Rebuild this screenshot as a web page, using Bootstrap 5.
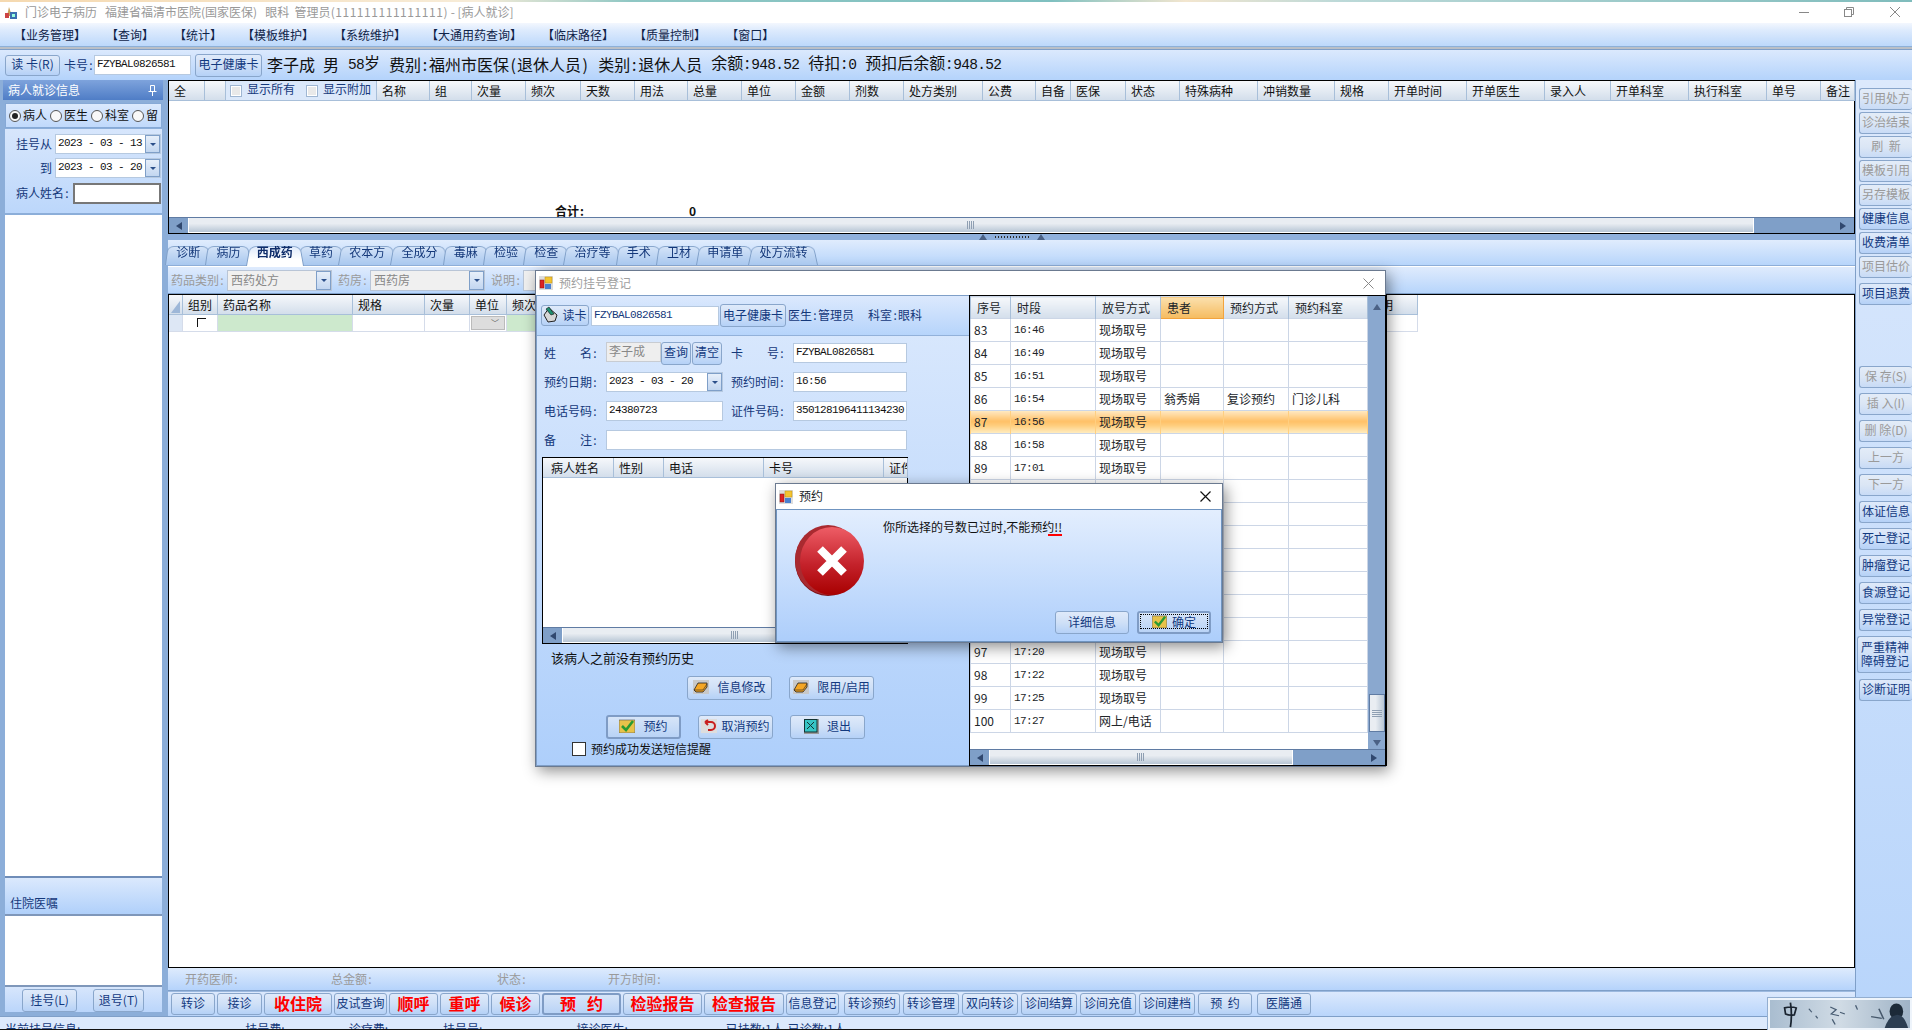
<!DOCTYPE html>
<html lang="zh">
<head>
<meta charset="utf-8">
<title>门诊电子病历</title>
<link href="https://cdn.jsdelivr.net/npm/bootstrap@5.3.0/dist/css/bootstrap.min.css" rel="stylesheet">
<style>
html,body{margin:0;height:100%;overflow:hidden}
body{width:1912px;height:1030px;background:#fff;color:#111;font:12px/1.2 "Noto Sans CJK SC","Liberation Sans",sans-serif;position:relative}
.fm{font-family:"Liberation Mono","Noto Sans CJK SC",monospace;font-size:11px;letter-spacing:-.6px}
.cn{display:inline-block;width:6px;text-align:center}
.big{font-size:16px;line-height:1}
.fmb{font-family:"Liberation Mono",monospace;font-size:14.5px;letter-spacing:-.7px}
.big .cn{width:8px}
.gapa{margin-left:9px}
.wallstrip{height:2px;background:linear-gradient(90deg,#f5d9b0 0,#f7ecd8 25%,#8fc7c4 33%,#7fc0c0 55%,#f3e6cf 62%,#bcd9d8 70%,#7fbcbc 100%)}
.titlebar{height:21px;background:#fff;color:#999;padding-left:3px;position:relative}
.titletxt{margin-left:6px;white-space:pre}
.ones{letter-spacing:.55px}
.winbtn{position:absolute;top:3px;width:14px;height:14px}
.wb1{left:1797px}.wb2{left:1842px}.wb3{left:1888px}
.menubar{height:24px;background:linear-gradient(#f3f7fe,#deebfd 30%,#bcd8fb);border-bottom:1px solid #8db0d8;padding:1px 0 0 14px;gap:20px;color:#0f2348}
.seprule{height:3px;background:#b9bfc7;border-bottom:1px solid #7f9fc8}
.toolbar{height:30px;padding:0 0 0 5px;background:linear-gradient(#dbe9fd,#b4d3fb);color:#111}
.toolinfo{margin-top:-3px;margin-left:5px}
.xbtn.btn{padding:0 0 2px;font-size:12px;line-height:1;color:#12397f;background:linear-gradient(#dfeafa,#cfe0f7 50%,#b5d1f7);border:1px solid #89a6cb;border-radius:3px;display:flex;align-items:center;justify-content:center;white-space:pre;flex:none}
.xbtn.btn.off{color:#9a9a9a;background:linear-gradient(#e3ecf8,#dbe6f5 50%,#c8dbf6)}
.xbtn.btn.red{color:#f00;font-size:16px;font-weight:700}
.xbtn.btn.def{border:2px solid #7f9cc5;background:linear-gradient(#d7e5f8,#b9d3f6)}
.fld{background:#fff;border:1px solid #b6c9e0;height:20px;padding:0 0 0 2px;display:flex;align-items:center;flex:none;white-space:pre}
.fld.dim{background:#eee;color:#888;border-color:#c8ccd2}
.ddb{margin-left:auto;width:15px;height:100%;flex:none;background:linear-gradient(#e7effa,#c2d6f0);border:1px solid #7f9fc8;display:flex;align-items:center;justify-content:center}
.ddb::after{content:"";border:3px solid transparent;border-top:3px solid #2b4f8a;border-bottom:0}
.lab{color:#14387a;white-space:pre;flex:none}
.w55{width:55px}.w97{width:97px}.w106{width:106px}.w88{width:88px}.w67{width:67px}.w51{width:51px}
.h21{height:21px}.h22{height:22px}.h23{height:23px}
.mainrow{height:936px}
.leftside{width:168px;flex:none;background:#8caed9;padding:0 5px 4px 3px}
.leftside>div:not(.sidehead){margin-left:2px;margin-right:1px}
.sidehead{height:20px;background:linear-gradient(#7ea3dc,#4f7dc6);color:#fff;padding:0 6px 0 5px;font-size:12px;margin-bottom:3px}
.radiorow{height:25px;border:1px solid #86a9d6;position:relative;padding:0 0 0 3px;overflow:hidden;background:linear-gradient(#dbe9fd,#c0d9fb);margin-bottom:1px;gap:2px}
.rd{width:12px;height:12px;border:1px solid #555;border-radius:50%;background:#f8f8f8;flex:none;display:flex;align-items:center;justify-content:center}
.rd.on::after{content:"";width:6px;height:6px;border-radius:50%;background:#222}
.rdt{width:25px;flex:none;color:#111;white-space:nowrap}
.datebox{height:84px;background:linear-gradient(#d7e6fc,#bcd7fb);padding-top:5px;margin-bottom:2px}
.dline{height:20px;margin-bottom:4px;justify-content:flex-end;padding-right:1px;gap:3px}
.dl3{margin-top:5px}
.namein{height:21px;border:2px solid #777}
.whitefill{background:#fff;flex:1 1 auto;border-bottom:2px solid #6f8db8}
.zybar{height:38px;background:linear-gradient(#dbe9fd,#b0d0fa);color:#14387a;padding:0 0 4px 5px;display:flex;align-items:flex-end;border-bottom:2px solid #7f97ba}
.lowfill{height:71px;background:#fff;border-bottom:2px solid #7f97ba}
.lowbtns{height:25px;gap:16px;padding:2px 0 0 17px;background:linear-gradient(#d7e6fc,#bad5fb)}
.centercol{width:1687px;flex:none}
.gridbox{height:154px;border:1px solid #000;background:#fff;display:flex;flex-direction:column}
.ghead{display:grid;height:20px;font-size:12px;flex:none}
.gcell{background:linear-gradient(#f6f8fb,#d3deeb);border-right:1px solid #a8bfd9;border-bottom:1px solid #a8bfd9;padding-left:5px;white-space:nowrap;overflow:hidden;line-height:19px}
.g1{grid-template-columns:36px 21px 151px 53px 42px 54px 55px 54px 53px 54px 54px 54px 54px 79px 53px 35px 55px 54px 78px 77px 54px 78px 78px 66px 78px 78px 54px 34px}
.g2{grid-template-columns:14px 35px 135px 72px 45px 37px 54px 803px 54px}
.gcell.showbar{background:#dbe8fa;color:#14387a;gap:5px;padding:0 0 4px 4px;line-height:1}
.mbox{width:12px;height:12px;border:1px solid #9fb6d2;background:#e9e9e9;box-shadow:inset 0 0 0 1px #fff;flex:none;margin-top:4px}
.mgap{margin-left:6px}
.hscroll{height:16px;background:#7f9fc8;border-top:1px solid #5f7ba3;position:relative;flex:none;display:flex}
.hbtn{width:19px;flex:none;display:flex;align-items:center;justify-content:center;background:#7f9fc8}
.thumb{background:linear-gradient(#e9edf2 40%,#b8c6d5);border:1px solid #fff;border-top:0;display:flex;align-items:center;justify-content:center}
.tw1{width:1566px}.tw2{width:304px}
.grip{width:8px;height:8px;background:repeating-linear-gradient(90deg,#8f9fb2 0 1px,transparent 1px 2px)}
.tri-l{border:4px solid transparent;border-right:6px solid #30486f;border-left:0}
.tri-r{border:4px solid transparent;border-left:6px solid #30486f;border-right:0}
.tri-u{border:4px solid transparent;border-bottom:6px solid #4b6185;border-top:0}
.tri-d{border:4px solid transparent;border-top:6px solid #4b6185;border-bottom:0}
.sumrow{padding-left:386px;height:0;line-height:1}
.sumval{margin-left:104px}
.splitter{height:6px;background:#8fb0dc;gap:8px}
.dots{width:34px;height:2px;background:repeating-linear-gradient(90deg,#2c2c2c 0 1px,transparent 1px 3px)}
.tabbar.nav{height:26px;background:linear-gradient(#e0ecfd,#b7d5fb);border-bottom:1px solid #8eaed8;padding-top:3px;flex-wrap:nowrap;align-items:stretch}
.tabbar .tabi{position:relative;padding:0 8.13px 4px;display:flex;align-items:center;color:#14387a;z-index:1;height:22px;white-space:nowrap;text-decoration:none}
.tabbar .tabi::before{content:"";position:absolute;inset:0 -3px 0 -3px;background:linear-gradient(#d5e4f8,#a9c8ef);border:1px solid #7f9fc8;border-bottom:0;border-radius:7px 7px 0 0;transform:perspective(34px) rotateX(12deg);transform-origin:bottom;z-index:-1}
.tabbar .tabi.active{font-weight:700;z-index:3;color:#0f2d6a;height:23px}
.tabbar .tabi.active::before{background:linear-gradient(#dfeafb,#fff 70%)}
.subbar{height:27px;background:linear-gradient(#dfebfd,#b7d5fb);color:#9a9a9a;padding-left:3px;margin-top:1px;gap:2px;border-bottom:1px solid #7f9fc8}
.seltop{height:21px;background:#f0f0f0;border:1px solid #b9c5d6;color:#888;padding-left:3px;flex:none;display:flex;align-items:center}
.s103{width:105px}.s115{width:115px}.s100{width:100px}
.gridb2{height:674px;border:1px solid #000;background:#fff;overflow:hidden}
.rowb{display:grid;height:17px}
.rcell{border-right:1px solid #d5dcea;border-bottom:1px solid #d5dcea;background:#fff}
.rcell.hd{background:#dde7f5}
.rcell.gr{background:#cde9cd}
.corner{position:relative}
.corner::after{content:"";position:absolute;left:14px;top:3px;width:9px;height:9px;border-top:1px solid #111;border-left:1px solid #111}
.unitc{padding:1px;display:flex}
.unitc i{flex:1;background:#ddd;border:1px solid #bbb;display:flex;justify-content:flex-end;align-items:center;padding-right:5px;font-style:normal;font-size:8px;color:#555}
.footinfo{height:23px;background:linear-gradient(#deebfd,#b5d3fb);color:#9a9a9a;border-bottom:1px solid #7f9fc8;position:relative}
.footinfo span{flex:none}
.footA{margin-left:17px;width:146px}.footB{width:166px}.footC{width:111px}
.btnbar{height:25px;gap:2px;padding:1px 0 1px 3px;background:linear-gradient(#dce9fd,#b9d5fb);border-top:1px solid #9cb9df}
.b44{width:44px}.b45{width:45px}.b68{width:68px}.b53{width:53px}.b49{width:49px}.b79{width:79px}.b80{width:80px}.b56{width:56px}.b54{width:54px}
.gp1{margin-left:1px}.gp3{margin-left:3px}
.rightstrip{flex:1 1 auto;background:linear-gradient(#dce9fc,#b8d5fb);border-left:1px solid #7f9fc8;padding:8px 0 0 3px;overflow:hidden}
.rightstrip .xbtn{width:53px;height:22px;border-right:0}
.stripA{gap:2px}.stripgap{margin-top:3px}
.stripB{margin-top:61px;gap:5px}
.rightstrip .tall{height:37px;white-space:normal;line-height:1.1;text-align:center;margin-left:-2px;width:55px}
.rightstrip .tall2{margin-top:1px}
.statusbar{height:14px;background:#dce9fc;border-top:1px solid #7f9fc8;border-bottom:1px solid #111;overflow:hidden;color:#14387a;padding-left:5px;line-height:24px;white-space:nowrap}
.statusbar span{display:inline-block}
.sb1{margin-left:165px}.sb2{margin-left:64px}.sb3{margin-left:55px}.sb4{margin-left:94px}.sb5{margin-left:98px}.sb6{margin-left:4px}
.xwin.modal-content{position:absolute;border-radius:0;background:#fff;border:1px solid #6b7a90;box-shadow:3px 4px 14px rgba(0,0,0,.45);display:flex;flex-direction:column}
.xwin.regwin{left:535px;top:270px;width:851px;height:497px}
.xwin.errwin{left:775px;top:483px;width:448px;height:160px}
.wintitle{height:25px;background:#fff;flex:none;gap:6px;padding:0 3px;color:#a0a0a0;position:relative}
.regwin .wintitle{height:24px}
.winx{position:absolute;right:10px;top:6px;width:13px;height:13px}
.regbody{min-height:0}
.leftpane{width:433px;flex:none;background:linear-gradient(#dbe9fd,#aecffb);border:1px solid #7f9fc8;border-right:0;position:relative;height:100%}
.toppanel{height:40px;padding-left:4px;gap:2px;background:linear-gradient(#dce9fd,#b6d4fb);border-bottom:1px solid #92b1da;color:#14387a}
.w48{width:48px}.w128{width:128px}.w66{width:66px}.nudge{margin-left:-1px}.w55f{width:55px}.w30{width:30px}.mem{margin-left:12px}
.formgrid{display:grid;grid-template-columns:56px 117px 54px 114px;column-gap:8px;row-gap:9px;padding:7px 0 0 5px;grid-auto-rows:20px;align-items:center}
.rlab{text-align:right;white-space:pre;color:#14387a}
.memo{grid-column:2 / span 3}
.histbox{margin:7px 0 0 5px;width:366px;height:187px;border:1px solid #000;background:#fff;display:flex;flex-direction:column}
.g3{grid-template-columns:71px 50px 100px 120px 24px}
.nohist{margin:5px 0 0 14px;font-size:13px;line-height:18px;color:#111}
.hrow1{margin:9px 0 0 150px;gap:17px}.hrow1 .xbtn{width:85px;height:24px}
.hrow2{margin:15px 0 0 69px;gap:17px}.hrow2 .xbtn{width:75px;height:24px}
.chkline{margin:3px 0 0 35px;gap:5px;color:#111}
.smsbox{width:14px;height:14px;background:#fff;border:1px solid #333;flex:none}
.rightpane{flex:1 1 auto;border:1px solid #000;border-right:2px solid #000;background:#fff;display:flex;flex-direction:column;height:100%}
.rtable.table{margin:0;table-layout:fixed;width:397px;--bs-table-border-color:#ccd6e6;--bs-table-bg:transparent;font-size:12px;--bs-border-width:1px}
.rtable th{height:22px;padding:0 0 0 6px;font-weight:400;background:linear-gradient(#f6f8fb,#d3deeb);border-color:#a8bfd9;line-height:21px;white-space:nowrap}
.rtable th.sel{background:linear-gradient(#fbe0ad,#f5bb5f);border-color:#f2a33d;border-width:0 1px 1px 1px}
.rtable th:nth-child(1){width:40px}.rtable th:nth-child(2){width:85px}.rtable th:nth-child(3){width:65px}.rtable th:nth-child(4){width:63px}.rtable th:nth-child(5){width:65px}.rtable th:nth-child(6){width:79px}
.rtable td{height:23px;padding:0 0 0 3px;vertical-align:middle;line-height:22px;white-space:nowrap;overflow:hidden}
.rtable tr.cur td{background:linear-gradient(#ffe6bd,#ffc066 45%,#ffcf80 65%,#ffeec4);border-color:#ffcf80}
.vscroll{width:17px;flex:none;background:#8aa8cf;display:flex;flex-direction:column;align-items:center}
.vthumb{width:16px;height:38px;margin-top:384px;background:linear-gradient(90deg,#e9edf2 40%,#b8c6d5);border:1px solid #5f7ba3;display:flex;align-items:center;justify-content:center}
.hgrip{width:10px;height:7px;background:repeating-linear-gradient(#8f9fb2 0 1px,transparent 1px 2px)}
.errbody{flex:1;background:linear-gradient(#e3eefe,#adcefb);border:1px solid #6f94c0;position:relative;padding:10px 0 0 106px;color:#111}
.redmark{display:inline-block;position:relative;line-height:14px}
.redmark::after{content:"";position:absolute;left:-6px;right:0;bottom:-2px;height:2px;background:#f00}
.erricon{position:absolute;left:17px;top:14px}
.errbtns{position:absolute;left:278px;top:101px;gap:8px}
.w74{width:74px}
.focusdot{border:1px dotted #000;flex:1;align-self:stretch;display:flex;align-items:center;justify-content:center;gap:5px;margin:1px}
.photo{position:absolute;left:1768px;top:998px;width:144px;height:32px;border:2px solid #eef4fb;outline:1px solid #93aed0;overflow:hidden}
</style>
</head>
<body>
<div class="wallstrip"></div>
<div class="titlebar d-flex align-items-center">
  <svg width="16" height="16" viewBox="0 0 16 16"><path d="M6 2l3 9H4z" fill="#c9a25a"/><rect x="2" y="8" width="4" height="5" fill="#c44"/><rect x="7" y="7" width="7" height="7" fill="#3c6fb0"/><rect x="9" y="9" width="3" height="3" fill="#9fd"/></svg>
  <span class="titletxt">门诊电子病历   福建省福清市医院(国家医保)   眼科  管理员<span class="ones">(111111111111111)</span> - [病人就诊]</span>
  <svg class="winbtn wb1" viewBox="0 0 14 14"><path d="M2 7.5h10" stroke="#888"/></svg>
  <svg class="winbtn wb2" viewBox="0 0 14 14" fill="none" stroke="#888"><rect x="2.5" y="4.5" width="7" height="7"/><path d="M4.5 4.5v-2h7v7h-2"/></svg>
  <svg class="winbtn wb3" viewBox="0 0 14 14"><path d="M2 2l10 10M12 2L2 12" stroke="#888"/></svg>
</div>
<div class="menubar d-flex align-items-center">
  <span>【业务管理】</span><span>【查询】</span><span>【统计】</span><span>【模板维护】</span><span>【系统维护】</span><span>【大通用药查询】</span><span>【临床路径】</span><span>【质量控制】</span><span>【窗口】</span>
</div>
<div class="seprule"></div>
<div class="toolbar d-flex align-items-center">
  <button class="btn xbtn w55 h21">读 卡(R)</button>
  <span class="lab ms-1">卡号<span class="cn">:</span></span>
  <div class="fld fm w97">FZYBAL0826581</div>
  <button class="btn xbtn ms-1 w67 h23">电子健康卡</button>
  <div class="toolinfo d-flex align-items-center text-nowrap">
    <span class="big">李子成</span><span class="big ms-2">男</span><span class="big gapa"><span class="fmb">58</span>岁</span><span class="big gapa">费别<span class="cn">:</span>福州市医保<span class="cn">(</span>退休人员<span class="cn">)</span></span><span class="big gapa">类别<span class="cn">:</span>退休人员</span><span class="big gapa">余额<span class="cn">:</span><span class="fmb">948.52</span></span><span class="big gapa">待扣<span class="cn">:</span><span class="fmb">0</span></span><span class="big gapa">预扣后余额<span class="cn">:</span><span class="fmb">948.52</span></span>
  </div>
</div>

<div class="mainrow d-flex">
  <aside class="leftside d-flex flex-column">
    <div class="sidehead d-flex align-items-center justify-content-between"><span>病人就诊信息</span>
      <svg width="9" height="11" viewBox="0 0 9 11" fill="none" stroke="#fff"><path d="M2.5.5h4v6h-4zM.5 6.5h8M4.5 6.5V11"/></svg></div>
    <div class="radiorow d-flex align-items-center"><span class="rd on"></span><span class="rdt">病人</span><span class="rd"></span><span class="rdt">医生</span><span class="rd"></span><span class="rdt">科室</span><span class="rd"></span><span class="rdt">留</span></div>
    <div class="datebox">
      <div class="dline d-flex align-items-center"><span class="lab">挂号从</span><div class="fld fm w106">2023 - 03 - 13<span class="ddb"></span></div></div>
      <div class="dline d-flex align-items-center"><span class="lab">到</span><div class="fld fm w106">2023 - 03 - 20<span class="ddb"></span></div></div>
      <div class="dline dl3 d-flex align-items-center"><span class="lab">病人姓名<span class="cn">:</span></span><div class="fld w88 namein"></div></div>
    </div>
    <div class="whitefill"></div>
    <div class="zybar">住院医嘱</div>
    <div class="lowfill"></div>
    <div class="lowbtns d-flex"><button class="btn xbtn w55 h23">挂号(L)</button><button class="btn xbtn w51 h23">退号(T)</button></div>
  </aside>

  <main class="centercol d-flex flex-column">
    <section class="gridbox">
      <div class="ghead g1">
        <div class="gcell">全</div><div class="gcell"></div>
        <div class="gcell showbar d-flex align-items-center"><span class="mbox"></span><span>显示所有</span><span class="mbox mgap"></span><span>显示附加</span></div>
        <div class="gcell">名称</div><div class="gcell">组</div><div class="gcell">次量</div><div class="gcell">频次</div><div class="gcell">天数</div><div class="gcell">用法</div><div class="gcell">总量</div><div class="gcell">单位</div><div class="gcell">金额</div><div class="gcell">剂数</div><div class="gcell">处方类别</div><div class="gcell">公费</div><div class="gcell">自备</div><div class="gcell">医保</div><div class="gcell">状态</div><div class="gcell">特殊病种</div><div class="gcell">冲销数量</div><div class="gcell">规格</div><div class="gcell">开单时间</div><div class="gcell">开单医生</div><div class="gcell">录入人</div><div class="gcell">开单科室</div><div class="gcell">执行科室</div><div class="gcell">单号</div><div class="gcell">备注</div>
      </div>
      <div class="flex-grow-1 d-flex align-items-end fw-bold sumrow"><span>合计<span class="cn">:</span></span><span class="sumval">0</span></div>
      <div class="hscroll"><span class="hbtn"><i class="tri-l"></i></span><div class="thumb tw1"><span class="grip"></span></div><span class="flex-grow-1 d-flex align-items-center justify-content-end pe-2"><i class="tri-r"></i></span></div>
    </section>
    <div class="splitter d-flex align-items-center justify-content-center"><i class="tri-u"></i><span class="dots"></span><i class="tri-u"></i></div>
    <nav class="nav tabbar">
      <a class="tabi">诊断</a><a class="tabi">病历</a><a class="tabi active">西成药</a><a class="tabi">草药</a><a class="tabi">农本方</a><a class="tabi">全成分</a><a class="tabi">毒麻</a><a class="tabi">检验</a><a class="tabi">检查</a><a class="tabi">治疗等</a><a class="tabi">手术</a><a class="tabi">卫材</a><a class="tabi">申请单</a><a class="tabi">处方流转</a>
    </nav>
    <div class="subbar d-flex align-items-center">
      <span>药品类别<span class="cn">:</span></span><div class="seltop s103">西药处方<span class="ddb"></span></div>
      <span class="ms-1">药房<span class="cn">:</span></span><div class="seltop s115">西药房<span class="ddb"></span></div>
      <span class="ms-1">说明<span class="cn">:</span></span><div class="seltop s100"></div>
    </div>
    <section class="gridb2">
      <div class="ghead g2">
        <div class="gcell p-0"><svg width="13" height="19" viewBox="0 0 13 19"><path d="M2 16L11 4v12z" fill="#9db7d8"/></svg></div>
        <div class="gcell">组别</div><div class="gcell">药品名称</div><div class="gcell">规格</div><div class="gcell">次量</div><div class="gcell">单位</div><div class="gcell">频次</div><div class="gcell"></div><div class="gcell">说明</div>
      </div>
      <div class="rowb g2">
        <div class="rcell hd"></div><div class="rcell corner"></div><div class="rcell gr"></div><div class="rcell"></div><div class="rcell"></div><div class="rcell unitc"><i>﹀</i></div><div class="rcell gr"></div><div class="rcell"></div><div class="rcell"></div>
      </div>
    </section>
    <div class="footinfo d-flex align-items-center"><span class="footA">开药医师<span class="cn">:</span></span><span class="footB">总金额<span class="cn">:</span></span><span class="footC">状态<span class="cn">:</span></span><span>开方时间<span class="cn">:</span></span></div>
    <div class="btnbar d-flex">
      <button class="btn xbtn b44">转诊</button><button class="btn xbtn b45">接诊</button><button class="btn xbtn red b68">收住院</button><button class="btn xbtn b53">皮试查询</button><button class="btn xbtn red b49">顺呼</button><button class="btn xbtn red b49">重呼</button><button class="btn xbtn red b49">候诊</button><button class="btn xbtn red def b79">预   约</button><button class="btn xbtn red b79">检验报告</button><button class="btn xbtn red b80">检查报告</button><button class="btn xbtn b53">信息登记</button><button class="btn xbtn b56 gp3">转诊预约</button><button class="btn xbtn b56 gp1">转诊管理</button><button class="btn xbtn b56 gp1">双向转诊</button><button class="btn xbtn b56 gp1">诊间结算</button><button class="btn xbtn b56 gp1">诊间充值</button><button class="btn xbtn b56 gp1">诊间建档</button><button class="btn xbtn b54 gp1">预  约</button><button class="btn xbtn b54 gp3">医膳通</button>
    </div>
  </main>

  <aside class="rightstrip d-flex flex-column">
    <div class="d-flex flex-column stripA">
      <button class="btn xbtn off">引用处方</button><button class="btn xbtn off">诊治结束</button><button class="btn xbtn off">刷  新</button><button class="btn xbtn off">模板引用</button><button class="btn xbtn off">另存模板</button><button class="btn xbtn">健康信息</button><button class="btn xbtn">收费清单</button><button class="btn xbtn off">项目估价</button><button class="btn xbtn stripgap">项目退费</button>
    </div>
    <div class="d-flex flex-column stripB">
      <button class="btn xbtn off">保 存(S)</button><button class="btn xbtn off">插 入(I)</button><button class="btn xbtn off">删 除(D)</button><button class="btn xbtn off">上一方</button><button class="btn xbtn off">下一方</button><button class="btn xbtn">体证信息</button><button class="btn xbtn">死亡登记</button><button class="btn xbtn">肿瘤登记</button><button class="btn xbtn">食源登记</button><button class="btn xbtn">异常登记</button><button class="btn xbtn tall">严重精神<br>障碍登记</button><button class="btn xbtn tall2">诊断证明</button>
    </div>
  </aside>
</div>
<div class="statusbar"><span>当前挂号信息:</span><span class="sb1">挂号费:</span><span class="sb2">诊疗费:</span><span class="sb3">挂号号:</span><span class="sb4">接诊医生:</span><span class="sb5">已挂数:1人</span><span class="sb6">已诊数:1人</span></div>

<svg class="photo" viewBox="0 0 144 32" preserveAspectRatio="none">
  <defs><linearGradient id="phbg" x1="0" x2="1"><stop offset="0" stop-color="#a9bdd0"/><stop offset=".5" stop-color="#d0dbe5"/><stop offset="1" stop-color="#9fb3c6"/></linearGradient></defs>
  <rect width="144" height="32" fill="url(#phbg)"/>
  <path d="M15 9q7-2 12 0l-2 8q-5 1-9-1zM21 3q2 14 0 28" fill="none" stroke="#1a2430" stroke-width="1.8"/>
  <path d="M40 10l3 4M47 18l2 3M62 8l6 3 -5 5 8 2M64 22l3 6M72 14l5 2M88 6l2 5" fill="none" stroke="#4a5e74" stroke-width="1.4"/>
  <ellipse cx="130" cy="13" rx="7" ry="9" fill="#1c2a38"/><path d="M118 32q4-14 12-15t12 15z" fill="#2c3e52"/><path d="M104 19l11 2M112 10l5 12" stroke="#46586b" stroke-width="1.6"/>
</svg>

<!-- 预约挂号登记 window -->
<div class="modal-content xwin regwin">
  <div class="wintitle d-flex align-items-center">
    <svg width="14" height="14" viewBox="0 0 14 14"><rect width="14" height="14" fill="#ddd"/><rect x="6" y="1" width="7" height="6" fill="#f4c430" stroke="#b98a12" stroke-width=".5"/><rect x="1" y="4" width="4" height="8" fill="#d22" stroke="#811" stroke-width=".5"/><rect x="6" y="8" width="6" height="5" fill="#4a80d0"/></svg>
    <span>预约挂号登记</span>
    <svg class="winx" viewBox="0 0 13 13"><path d="M1.5 1.5l10 10M11.5 1.5l-10 10" stroke="#888" stroke-width="1"/></svg>
  </div>
  <div class="d-flex flex-grow-1 regbody">
    <div class="leftpane">
      <div class="toppanel d-flex align-items-center">
        <button class="btn xbtn gap-1 w48 h21">
          <svg width="15" height="17" viewBox="0 0 15 17"><path d="M1 9l5-7 8 7-2 6-7 1z" fill="#d6d6d6" stroke="#222"/><path d="M3 3l3-2 5 7-3 1z" fill="#1c8f70" stroke="#111" stroke-width=".6"/></svg>读卡</button>
        <div class="fld fm w128">FZYBAL0826581</div>
        <button class="btn xbtn w66 h23 nudge">电子健康卡</button>
        <span class="lab">医生<span class="cn">:</span>管理员</span><span class="lab mem">科室<span class="cn">:</span>眼科</span>
      </div>
      <div class="formgrid">
        <span class="rlab">姓&emsp;&emsp;名<span class="cn">:</span></span>
        <div class="d-flex"><div class="fld dim w55f">李子成</div><button class="btn xbtn w30 h23">查询</button><button class="btn xbtn w30 h23 gp1">清空</button></div>
        <span class="rlab">卡&emsp;&emsp;号<span class="cn">:</span></span><div class="fld fm">FZYBAL0826581</div>
        <span class="rlab">预约日期<span class="cn">:</span></span><div class="fld fm">2023 - 03 - 20<span class="ddb"></span></div>
        <span class="rlab">预约时间<span class="cn">:</span></span><div class="fld fm">16:56</div>
        <span class="rlab">电话号码<span class="cn">:</span></span><div class="fld fm">24380723</div>
        <span class="rlab">证件号码<span class="cn">:</span></span><div class="fld fm">350128196411134230</div>
        <span class="rlab">备&emsp;&emsp;注<span class="cn">:</span></span><div class="fld memo"></div>
      </div>
      <div class="histbox">
        <div class="ghead g3"><div class="gcell ps-2">病人姓名</div><div class="gcell">性别</div><div class="gcell">电话</div><div class="gcell">卡号</div><div class="gcell">证件</div></div>
        <div class="flex-grow-1"></div>
        <div class="hscroll"><span class="hbtn"><i class="tri-l"></i></span><div class="thumb flex-grow-1"><span class="grip"></span></div></div>
      </div>
      <p class="nohist mb-0">该病人之前没有预约历史</p>
      <div class="d-flex hrow1"><button class="btn xbtn gap-2"><svg width="16" height="14" viewBox="0 0 16 14"><rect width="16" height="14" fill="#c8c8c8"/><path d="M1 10l4-7h9v4l-4 5H3z" fill="#f5a623" stroke="#222" stroke-width=".8"/><path d="M1 10h9l4-6" fill="none" stroke="#222" stroke-width=".6"/></svg>信息修改</button><button class="btn xbtn gap-2"><svg width="16" height="14" viewBox="0 0 16 14"><rect width="16" height="14" fill="#c8c8c8"/><path d="M1 10l4-7h9v4l-4 5H3z" fill="#f5a623" stroke="#222" stroke-width=".8"/><path d="M1 10h9l4-6" fill="none" stroke="#222" stroke-width=".6"/></svg>限用/启用</button></div>
      <div class="d-flex hrow2"><button class="btn xbtn def gap-2"><svg width="16" height="14" viewBox="0 0 16 14"><rect y="1" width="16" height="13" fill="#e8c24a" stroke="#555" stroke-width=".6"/><path d="M3 7l4 4 7-9" fill="none" stroke="#2a9a32" stroke-width="2.6"/></svg>预约</button><button class="btn xbtn gap-1"><svg width="16" height="14" viewBox="0 0 16 14"><rect width="16" height="14" fill="#ddd"/><path d="M4 3h6a3.5 3.5 0 0 1 0 8H7M4 3l3-2M4 3l3 3" fill="none" stroke="#c81e1e" stroke-width="2"/></svg>取消预约</button><button class="btn xbtn gap-2"><svg width="15" height="15" viewBox="0 0 15 15"><rect width="15" height="15" fill="#999"/><rect x=".5" y=".5" width="12.5" height="12.5" fill="#35c4c4" stroke="#133"/><path d="M3 3l7 7M10 3l-7 7" stroke="#133"/></svg>退出</button></div>
      <div class="d-flex align-items-center chkline"><span class="smsbox"></span><span>预约成功发送短信提醒</span></div>
    </div>
    <div class="rightpane">
      <div class="d-flex flex-grow-1 overflow-hidden">
        <div class="flex-grow-1 overflow-hidden">
        <table class="table table-bordered rtable">
          <thead><tr><th>序号</th><th>时段</th><th>放号方式</th><th class="sel">患者</th><th>预约方式</th><th>预约科室</th></tr></thead>
          <tbody>
          <tr><td>83</td><td class="fm">16:46</td><td>现场取号</td><td></td><td></td><td></td></tr>
          <tr><td>84</td><td class="fm">16:49</td><td>现场取号</td><td></td><td></td><td></td></tr>
          <tr><td>85</td><td class="fm">16:51</td><td>现场取号</td><td></td><td></td><td></td></tr>
          <tr><td>86</td><td class="fm">16:54</td><td>现场取号</td><td>翁秀娟</td><td>复诊预约</td><td>门诊儿科</td></tr>
          <tr class="cur"><td>87</td><td class="fm">16:56</td><td>现场取号</td><td></td><td></td><td></td></tr>
          <tr><td>88</td><td class="fm">16:58</td><td>现场取号</td><td></td><td></td><td></td></tr>
          <tr><td>89</td><td class="fm">17:01</td><td>现场取号</td><td></td><td></td><td></td></tr>
          <tr><td>90</td><td class="fm">17:03</td><td>现场取号</td><td></td><td></td><td></td></tr>
          <tr><td>91</td><td class="fm">17:06</td><td>现场取号</td><td></td><td></td><td></td></tr>
          <tr><td>92</td><td class="fm">17:08</td><td>现场取号</td><td></td><td></td><td></td></tr>
          <tr><td>93</td><td class="fm">17:11</td><td>现场取号</td><td></td><td></td><td></td></tr>
          <tr><td>94</td><td class="fm">17:13</td><td>现场取号</td><td></td><td></td><td></td></tr>
          <tr><td>95</td><td class="fm">17:15</td><td>现场取号</td><td></td><td></td><td></td></tr>
          <tr><td>96</td><td class="fm">17:18</td><td>现场取号</td><td></td><td></td><td></td></tr>
          <tr><td>97</td><td class="fm">17:20</td><td>现场取号</td><td></td><td></td><td></td></tr>
          <tr><td>98</td><td class="fm">17:22</td><td>现场取号</td><td></td><td></td><td></td></tr>
          <tr><td>99</td><td class="fm">17:25</td><td>现场取号</td><td></td><td></td><td></td></tr>
          <tr><td>100</td><td class="fm">17:27</td><td>网上/电话</td><td></td><td></td><td></td></tr>
          </tbody>
        </table>
        </div>
        <div class="vscroll"><i class="tri-u mt-2"></i><div class="vthumb"><span class="hgrip"></span></div><i class="tri-d mt-2"></i></div>
      </div>
      <div class="hscroll"><span class="hbtn"><i class="tri-l"></i></span><div class="thumb tw2"><span class="grip"></span></div><span class="flex-grow-1 d-flex align-items-center justify-content-end pe-2"><i class="tri-r"></i></span></div>
    </div>
  </div>
</div>

<!-- 预约 message box -->
<div class="modal-content xwin errwin">
  <div class="wintitle d-flex align-items-center text-dark">
    <svg width="14" height="14" viewBox="0 0 14 14"><rect width="14" height="14" fill="#ddd"/><rect x="6" y="1" width="7" height="6" fill="#f4c430" stroke="#b98a12" stroke-width=".5"/><rect x="1" y="4" width="4" height="8" fill="#d22" stroke="#811" stroke-width=".5"/><rect x="6" y="8" width="6" height="5" fill="#4a80d0"/></svg>
    <span>预约</span>
    <svg class="winx" viewBox="0 0 13 13"><path d="M1.5 1.5l10 10M11.5 1.5l-10 10" stroke="#111" stroke-width="1.2"/></svg>
  </div>
  <div class="errbody">
    <svg class="erricon" width="72" height="74" viewBox="0 0 72 74">
      <defs><linearGradient id="erg" x1="0" x2="0" y1="0" y2="1"><stop offset="0" stop-color="#ee5d66"/><stop offset=".55" stop-color="#c4222b"/><stop offset="1" stop-color="#a80000"/></linearGradient></defs>
      <ellipse cx="34" cy="37" rx="33" ry="35" fill="#7d1015"/><ellipse cx="34" cy="36" rx="33" ry="35" fill="#a92a30"/>
      <ellipse cx="38" cy="37" rx="32" ry="34" fill="url(#erg)"/>
      <path d="M26 25l12 12M50 25L38 37M26 49l12-12M50 49L38 37" stroke="#fff" stroke-width="8" stroke-linecap="butt"/>
    </svg>
    <span>你所选择的号数已过时,不能预约<span class="redmark">!!</span></span>
    <div class="d-flex errbtns">
      <button class="btn xbtn w74 h23">详细信息</button>
      <button class="btn xbtn def w74 h23"><span class="focusdot"><svg width="15" height="13" viewBox="0 0 16 14"><rect y="1" width="16" height="13" fill="#e8c24a" stroke="#555" stroke-width=".6"/><path d="M3 7l4 4 7-9" fill="none" stroke="#2a9a32" stroke-width="2.6"/></svg>确定</span></button>
    </div>
  </div>
</div>
<script src="https://cdn.jsdelivr.net/npm/bootstrap@5.3.0/dist/js/bootstrap.bundle.min.js"></script>
</body>
</html>
